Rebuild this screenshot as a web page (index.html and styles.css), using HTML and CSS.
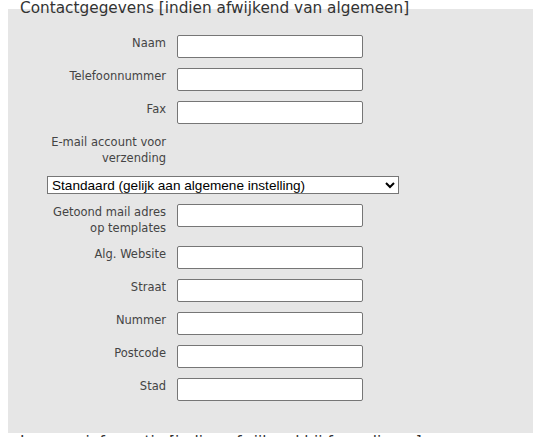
FILE: index.html
```html
<!DOCTYPE html>
<html lang="nl">
<head>
<meta charset="utf-8">
<title>Contactgegevens</title>
<link rel="stylesheet" href="styles.css">
</head>
<body>
<fieldset class="group">
  <legend class="group-title">Contactgegevens [indien afwijkend van algemeen]</legend>
  <div class="form-grid">
    <label class="lbl">Naam</label><input class="field" type="text">
    <label class="lbl">Telefoonnummer</label><input class="field" type="text">
    <label class="lbl">Fax</label><input class="field" type="text">
    <label class="lbl">E-mail account voor<br>verzending</label><span></span>
    <select class="select-wide"><option>Standaard (gelijk aan algemene instelling)</option></select>
    <label class="lbl">Getoond mail adres<br>op templates</label><input class="field" type="text">
    <label class="lbl">Alg. Website</label><input class="field" type="text">
    <label class="lbl">Straat</label><input class="field" type="text">
    <label class="lbl">Nummer</label><input class="field" type="text">
    <label class="lbl">Postcode</label><input class="field" type="text">
    <label class="lbl">Stad</label><input class="field" type="text">
  </div>
</fieldset>
<fieldset class="group group-next">
  <legend class="group-title">Logo en informatie [indien afwijkend bij formulieren]</legend>
</fieldset>
</body>
</html>
```
FILE: styles.css
```css
html, body {
  margin: 0;
  padding: 0;
  background: #ffffff;
}
body {
  padding: 0 4px 0 8px;
  font-family: "DejaVu Sans", sans-serif;
  color: #444;
}
.group {
  margin: 0;
  padding: 18px 0 32px 12px;
  border: 0;
  background: #e6e6e6;
  min-width: 0;
}
.group-next {
  margin-top: 1px;
}
.group-title {
  margin: 0;
  padding: 0;
  font-size: 15.3px;
  line-height: 17px;
  color: #333;
}
.form-grid {
  display: grid;
  grid-template-columns: 119px 186px;
  column-gap: 11px;
  row-gap: 10px;
  align-items: start;
  margin-left: 27px;
}
.lbl {
  font-size: 11.5px;
  line-height: 16px;
  text-align: right;
  color: #444;
}
.field {
  box-sizing: border-box;
  width: 186px;
  height: 23px;
  margin: 0;
  border: 1px solid #767676;
  border-radius: 2px;
  background: #fff;
}
.select-wide {
  grid-column: 1 / -1;
  box-sizing: border-box;
  width: 352px;
  height: 18px;
  margin: 0;
  font-family: "Liberation Sans", Arial, sans-serif;
  font-size: 13.6px;
  color: #000;
  border: 1px solid #767676;
  border-radius: 0;
  background: #fff;
}
```
